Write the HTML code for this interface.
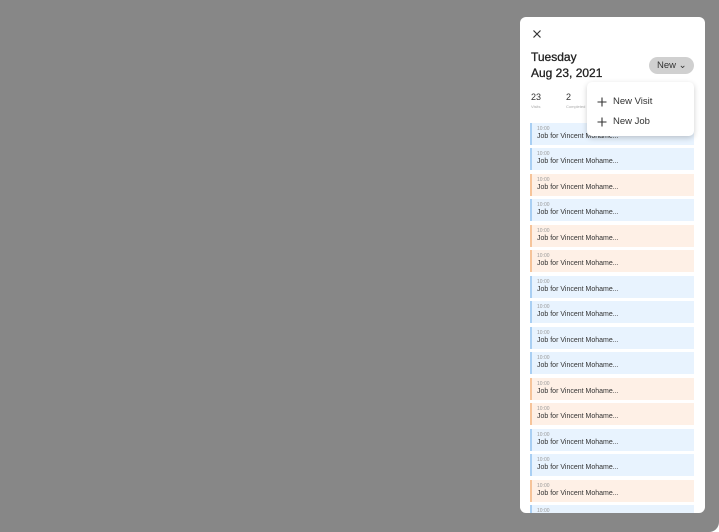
<!DOCTYPE html>
<html><head><style>
*{margin:0;padding:0;box-sizing:border-box}
body{width:719px;height:532px;background:#fff;font-family:"Liberation Sans",sans-serif;overflow:hidden;position:relative}
.bg{position:absolute;left:0;top:0;width:719px;height:532px;background:#878787;border-radius:0 0 10px 0}
.panel{position:absolute;left:520px;top:17px;width:185px;height:496px;background:#fff;border-radius:6px;overflow:hidden}
.x{position:absolute;left:12px;top:12px}
.title{position:absolute;left:11px;top:33px;font-size:12px;line-height:15.5px;color:#222;-webkit-text-stroke:0.3px #222}
.new{position:absolute;left:129px;top:40px;width:45px;height:17px;border-radius:9px;background:#d0d0d0;font-size:9.5px;color:#333;line-height:17px;padding-left:8px}
.stat{position:absolute;top:75px;font-size:9px;color:#333}
.stat small{display:block;font-size:4px;color:#aaa;margin-top:2px}
.card{position:absolute;left:10px;width:164px;height:22px;border-left:2px solid}
.b{background:#e8f3fe;border-color:#a9cff3}
.o{background:#fef0e6;border-color:#f6c49a}
.card i{position:absolute;left:5px;top:3px;font-style:normal;font-size:5px;color:#999}
.card span{position:absolute;left:5px;top:10px;font-size:7px;color:#333}
.dd{position:absolute;left:587px;top:82px;width:107px;height:54px;background:#fff;border-radius:5px;box-shadow:0 2px 6px rgba(0,0,0,.2)}
.dd div{position:absolute;left:10px;font-size:9.5px;color:#333;line-height:12px}
.dd svg{position:absolute;left:0;top:1px}
.dd div span{margin-left:16px}
</style></head><body>
<div class="bg"></div>
<div class="panel">
<svg class="x" width="10" height="10" viewBox="0 0 10 10"><path d="M1.5 1.5L8.5 8.5M8.5 1.5L1.5 8.5" stroke="#333" stroke-width="1.2"/></svg>
<div class="title">Tuesday<br>Aug 23, 2021</div>
<div class="new">New ⌄</div>
<div class="stat" style="left:11px">23<small>Visits</small></div>
<div class="stat" style="left:46px">2<small>Completed</small></div>
<div class="card b" style="top:106px"><i>10:00</i><span>Job for Vincent Mohame...</span></div>
<div class="card b" style="top:131px"><i>10:00</i><span>Job for Vincent Mohame...</span></div>
<div class="card o" style="top:157px"><i>10:00</i><span>Job for Vincent Mohame...</span></div>
<div class="card b" style="top:182px"><i>10:00</i><span>Job for Vincent Mohame...</span></div>
<div class="card o" style="top:208px"><i>10:00</i><span>Job for Vincent Mohame...</span></div>
<div class="card o" style="top:233px"><i>10:00</i><span>Job for Vincent Mohame...</span></div>
<div class="card b" style="top:259px"><i>10:00</i><span>Job for Vincent Mohame...</span></div>
<div class="card b" style="top:284px"><i>10:00</i><span>Job for Vincent Mohame...</span></div>
<div class="card b" style="top:310px"><i>10:00</i><span>Job for Vincent Mohame...</span></div>
<div class="card b" style="top:335px"><i>10:00</i><span>Job for Vincent Mohame...</span></div>
<div class="card o" style="top:361px"><i>10:00</i><span>Job for Vincent Mohame...</span></div>
<div class="card o" style="top:386px"><i>10:00</i><span>Job for Vincent Mohame...</span></div>
<div class="card b" style="top:412px"><i>10:00</i><span>Job for Vincent Mohame...</span></div>
<div class="card b" style="top:437px"><i>10:00</i><span>Job for Vincent Mohame...</span></div>
<div class="card o" style="top:463px"><i>10:00</i><span>Job for Vincent Mohame...</span></div>
<div class="card b" style="top:488px"><i>10:00</i><span>Job for Vincent Mohame...</span></div>
</div>
<div class="dd">
<div style="top:14px"><svg width="10" height="10" viewBox="0 0 10 10"><path d="M5 0.5V9.5M0.5 5H9.5" stroke="#333" stroke-width="1.1"/></svg><span>New Visit</span></div>
<div style="top:34px"><svg width="10" height="10" viewBox="0 0 10 10"><path d="M5 0.5V9.5M0.5 5H9.5" stroke="#333" stroke-width="1.1"/></svg><span>New Job</span></div>
</div>
</body></html>
